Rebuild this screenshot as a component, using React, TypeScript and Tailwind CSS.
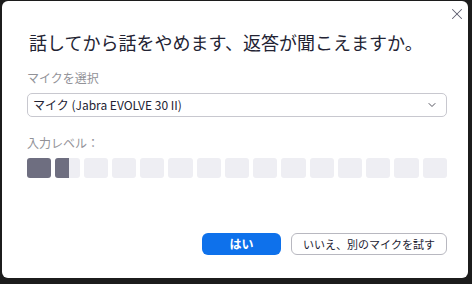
import React from 'react';
import { X, ChevronDown } from 'lucide-react';

const jp = { fontFamily: '"Noto Sans CJK JP", "Noto Sans", sans-serif' };

function LevelMeter({ level }: { level: number }) {
  // level is how many segments are lit, fractions allowed
  const segs = Array.from({ length: 15 }, (_, i) => Math.max(0, Math.min(1, level - i)));
  return (
    <div className="flex gap-[4px] h-[20px]">
      {segs.map((fill, i) => (
        <div key={i} className="flex-1 rounded-[3px] bg-[#eeeef3] overflow-hidden">
          <div className="h-full bg-[#6e6e80]" style={{ width: `${fill * 100}%` }} />
        </div>
      ))}
    </div>
  );
}

export default function App() {
  return (
    <div className="w-[472px] h-[284px] bg-[#1c1c1c] pt-[1px] pl-[2px] pr-[4px] pb-[6px]" style={jp}>
      <div className="relative h-full bg-white rounded-[6px] pl-[25px] pr-[21px] pt-[28px]">
        <button className="absolute top-[3px] right-[1px] w-[20px] h-[20px] flex items-center justify-center text-[#5f5f70]">
          <X className="w-[18px] h-[18px]" strokeWidth={1.4} />
        </button>

        <h1 className="text-[18px] leading-[26px] text-[#232333] pl-[2px]">
          話してから話をやめます、返答が聞こえますか。
        </h1>

        <div className="mt-[15px] text-[12px] leading-[16px] text-[#929298]">マイクを選択</div>
        <div className="mt-[7px] h-[24px] border border-[#c8c8cf] rounded-[5px] flex items-center justify-between pl-[5px] pr-[8px]">
          <span className="text-[12px] text-[#232333]">マイク (Jabra EVOLVE 30 II)</span>
          <ChevronDown className="w-[12px] h-[12px] text-[#555560]" strokeWidth={2} />
        </div>

        <div className="mt-[18px] text-[12px] leading-[16px] text-[#929298]">入力レベル：</div>
        <div className="mt-[7px]">
          <LevelMeter level={1.55} />
        </div>

        <div className="mt-[55px] flex justify-end gap-[10px]">
          <button className="w-[79px] h-[22px] rounded-[6px] bg-[#0e71eb] text-white text-[12px] font-bold">
            はい
          </button>
          <button className="w-[156px] h-[22px] rounded-[6px] border border-[#b8b8c0] bg-white text-[#232333] text-[11px]">
            いいえ、別のマイクを試す
          </button>
        </div>
      </div>
    </div>
  );
}
